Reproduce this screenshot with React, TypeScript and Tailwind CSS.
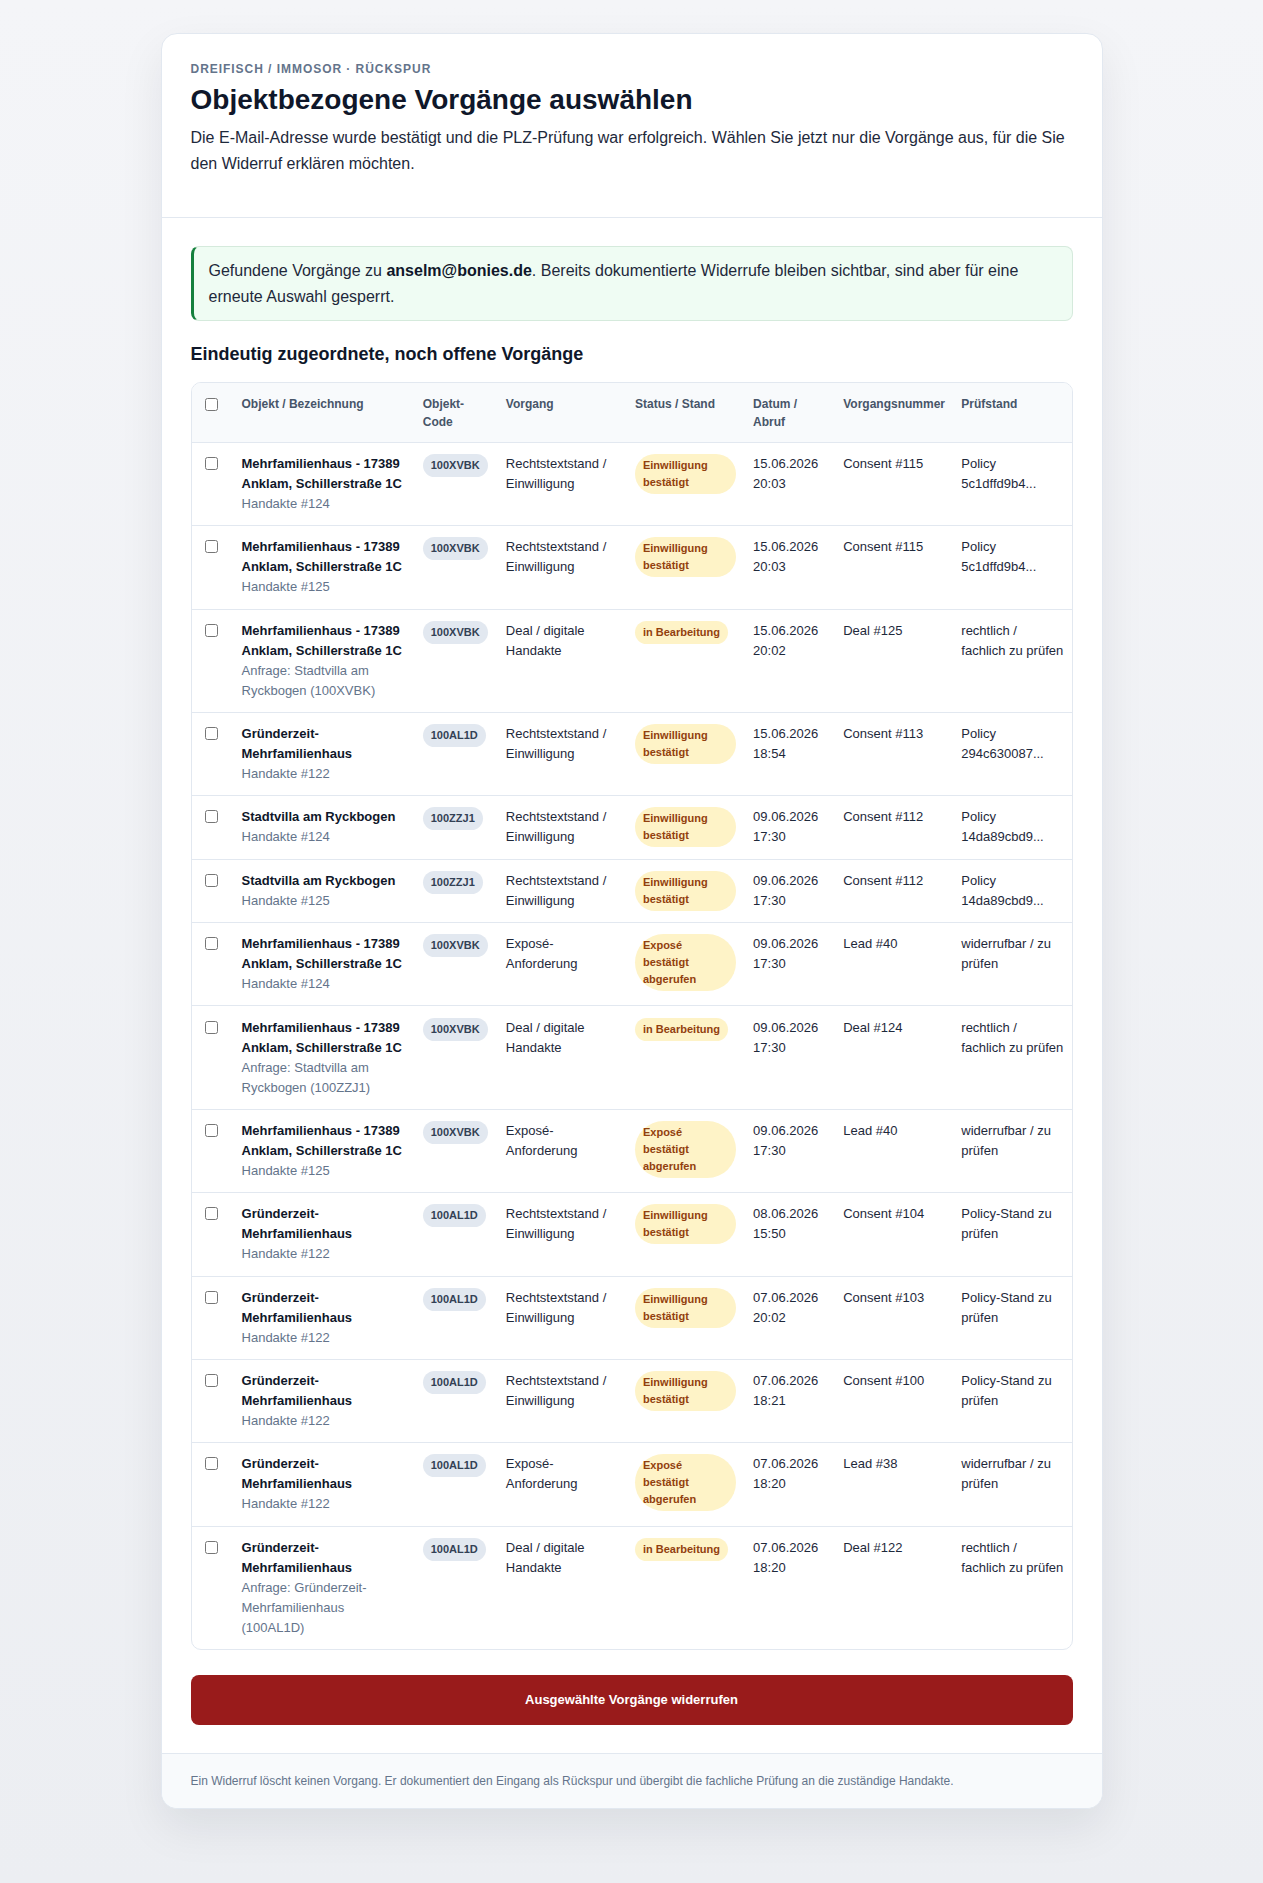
import React from "react";

type Row = {
  name: string;
  sub: string;
  code: string;
  vorgang: string;
  status: string;
  datum: string;
  nummer: string;
  pruef: string;
};

const MFH = "Mehrfamilienhaus - 17389 Anklam, Schillerstraße 1C";
const GZ = "Gründerzeit-Mehrfamilienhaus";
const SV = "Stadtvilla am Ryckbogen";
const RT = "Rechtstextstand / Einwilligung";
const DEAL = "Deal / digitale Handakte";
const EXP = "Exposé-Anforderung";
const EB = "Einwilligung bestätigt";
const EXB = "Exposé bestätigt abgerufen";
const IB = "in Bearbeitung";
const RF = "rechtlich / fachlich zu prüfen";
const WZ = "widerrufbar / zu prüfen";
const PS = "Policy-Stand zu prüfen";

const rows: Row[] = [
  { name: MFH, sub: "Handakte #124", code: "100XVBK", vorgang: RT, status: EB, datum: "15.06.2026 20:03", nummer: "Consent #115", pruef: "Policy 5c1dffd9b4..." },
  { name: MFH, sub: "Handakte #125", code: "100XVBK", vorgang: RT, status: EB, datum: "15.06.2026 20:03", nummer: "Consent #115", pruef: "Policy 5c1dffd9b4..." },
  { name: MFH, sub: "Anfrage: Stadtvilla am Ryckbogen (100XVBK)", code: "100XVBK", vorgang: DEAL, status: IB, datum: "15.06.2026 20:02", nummer: "Deal #125", pruef: RF },
  { name: GZ, sub: "Handakte #122", code: "100AL1D", vorgang: RT, status: EB, datum: "15.06.2026 18:54", nummer: "Consent #113", pruef: "Policy 294c630087..." },
  { name: SV, sub: "Handakte #124", code: "100ZZJ1", vorgang: RT, status: EB, datum: "09.06.2026 17:30", nummer: "Consent #112", pruef: "Policy 14da89cbd9..." },
  { name: SV, sub: "Handakte #125", code: "100ZZJ1", vorgang: RT, status: EB, datum: "09.06.2026 17:30", nummer: "Consent #112", pruef: "Policy 14da89cbd9..." },
  { name: MFH, sub: "Handakte #124", code: "100XVBK", vorgang: EXP, status: EXB, datum: "09.06.2026 17:30", nummer: "Lead #40", pruef: WZ },
  { name: MFH, sub: "Anfrage: Stadtvilla am Ryckbogen (100ZZJ1)", code: "100XVBK", vorgang: DEAL, status: IB, datum: "09.06.2026 17:30", nummer: "Deal #124", pruef: RF },
  { name: MFH, sub: "Handakte #125", code: "100XVBK", vorgang: EXP, status: EXB, datum: "09.06.2026 17:30", nummer: "Lead #40", pruef: WZ },
  { name: GZ, sub: "Handakte #122", code: "100AL1D", vorgang: RT, status: EB, datum: "08.06.2026 15:50", nummer: "Consent #104", pruef: PS },
  { name: GZ, sub: "Handakte #122", code: "100AL1D", vorgang: RT, status: EB, datum: "07.06.2026 20:02", nummer: "Consent #103", pruef: PS },
  { name: GZ, sub: "Handakte #122", code: "100AL1D", vorgang: RT, status: EB, datum: "07.06.2026 18:21", nummer: "Consent #100", pruef: PS },
  { name: GZ, sub: "Handakte #122", code: "100AL1D", vorgang: EXP, status: EXB, datum: "07.06.2026 18:20", nummer: "Lead #38", pruef: WZ },
  { name: GZ, sub: "Anfrage: Gründerzeit-Mehrfamilienhaus (100AL1D)", code: "100AL1D", vorgang: DEAL, status: IB, datum: "07.06.2026 18:20", nummer: "Deal #122", pruef: RF },
];

const th = "py-[11.2px] pl-[10px] pr-[10px] text-left align-top text-[12px] leading-[18px] font-bold text-[#475569]";
const td = "py-[11.2px] pl-[10px] pr-[10px] align-top text-[13px] leading-[20px] text-[#1e293b]";

export default function App() {
  return (
    <div className="min-h-screen bg-[linear-gradient(180deg,#f4f5f8_0%,#eceef2_100%)] pt-[33px] pb-[72px] font-['Liberation_Sans',Arial,sans-serif]">
      <div className="mx-auto w-[942px] overflow-hidden rounded-2xl border border-[#e2e8f0] bg-white shadow-[0_18px_45px_rgba(15,23,42,0.08)]">
        <header className="border-b border-[#e2e8f0] px-[29px] pt-[27px] pb-[41px]">
          <div className="text-[12px] font-bold uppercase leading-[16px] tracking-[0.08em] text-[#64748b]">
            Dreifisch / Immosor · Rückspur
          </div>
          <h1 className="mt-[6px] text-[28px] font-bold leading-[34px] text-[#0f172a]">
            Objektbezogene Vorgänge auswählen
          </h1>
          <p className="mt-[8px] text-[16px] leading-[25.6px] text-[#1e293b]">
            Die E-Mail-Adresse wurde bestätigt und die PLZ-Prüfung war erfolgreich. Wählen Sie jetzt nur die Vorgänge aus, für die Sie den Widerruf erklären möchten.
          </p>
        </header>

        <section className="px-[29px] pt-[28px] pb-[28px]">
          <div className="rounded-lg border border-[#d5eadc] border-l-[3px] border-l-[#15803d] bg-[#effcf3] py-[11px] pl-[15px] pr-4 text-[16px] leading-[25.6px] text-[#1e293b]">
            <p>
              Gefundene Vorgänge zu <strong className="font-bold text-[#0f172a]">anselm@bonies.de</strong>. Bereits dokumentierte Widerrufe bleiben sichtbar, sind aber für eine erneute Auswahl gesperrt.
            </p>
          </div>

          <h2 className="mt-[21px] text-[18px] font-bold leading-[24px] text-[#0f172a]">
            Eindeutig zugeordnete, noch offene Vorgänge
          </h2>

          <div className="mt-[16px] overflow-hidden rounded-[10px] border border-[#e2e8f0]">
            <table className="w-full table-fixed border-collapse">
              <colgroup>
                <col className="w-[40px]" />
                <col className="w-[181px]" />
                <col className="w-[83px]" />
                <col className="w-[129px]" />
                <col className="w-[118px]" />
                <col className="w-[90px]" />
                <col className="w-[118px]" />
                <col className="w-[120px]" />
              </colgroup>
              <thead>
                <tr className="border-b border-[#e2e8f0] bg-[#f8fafc]">
                  <th className={th + " !pl-[13px]"}>
                    <input type="checkbox" aria-label="Alle auswählen" className="mt-[3px] block h-[13px] w-[13px]" />
                  </th>
                  <th className={th}>Objekt / Bezeichnung</th>
                  <th className={th}>Objekt-Code</th>
                  <th className={th}>Vorgang</th>
                  <th className={th}>Status / Stand</th>
                  <th className={th}>Datum / Abruf</th>
                  <th className={th}>Vorgangsnummer</th>
                  <th className={th}>Prüfstand</th>
                </tr>
              </thead>
              <tbody>
                {rows.map((r, i) => (
                  <tr key={i} className={i < rows.length - 1 ? "border-b border-[#e2e8f0]" : ""}>
                    <td className={td + " !pl-[13px]"}>
                      <input type="checkbox" aria-label="Auswählen" className="mt-[3px] block h-[13px] w-[13px]" />
                    </td>
                    <td className={td}>
                      <div className="font-bold text-[#0f172a]">{r.name}</div>
                      <div className="text-[#64748b]">{r.sub}</div>
                    </td>
                    <td className={td}>
                      <span className="inline-block rounded-full bg-[#e2e8f0] px-2 py-[3px] align-top text-[11px] font-bold leading-[17px] text-[#334155]">
                        {r.code}
                      </span>
                    </td>
                    <td className={td}>{r.vorgang}</td>
                    <td className={td + " !pr-[7px]"}>
                      <span className="inline-block rounded-full bg-[#fef3c7] px-2 py-[3px] align-top text-[11px] font-bold leading-[17px] text-[#92400e]">
                        {r.status}
                      </span>
                    </td>
                    <td className={td}>{r.datum}</td>
                    <td className={td}>{r.nummer}</td>
                    <td className={td + " !pr-[7.4px]"}>{r.pruef}</td>
                  </tr>
                ))}
              </tbody>
            </table>
          </div>

          <button
            type="button"
            className="mt-[25px] flex h-[50px] w-full items-center justify-center rounded-lg bg-[#991b1b] text-[13px] font-bold text-white"
          >
            Ausgewählte Vorgänge widerrufen
          </button>
        </section>

        <footer className="border-t border-[#e2e8f0] bg-[#f8fafc] px-[29px] py-[18px] text-[12px] leading-[18px] text-[#64748b]">
          Ein Widerruf löscht keinen Vorgang. Er dokumentiert den Eingang als Rückspur und übergibt die fachliche Prüfung an die zuständige Handakte.
        </footer>
      </div>
    </div>
  );
}
